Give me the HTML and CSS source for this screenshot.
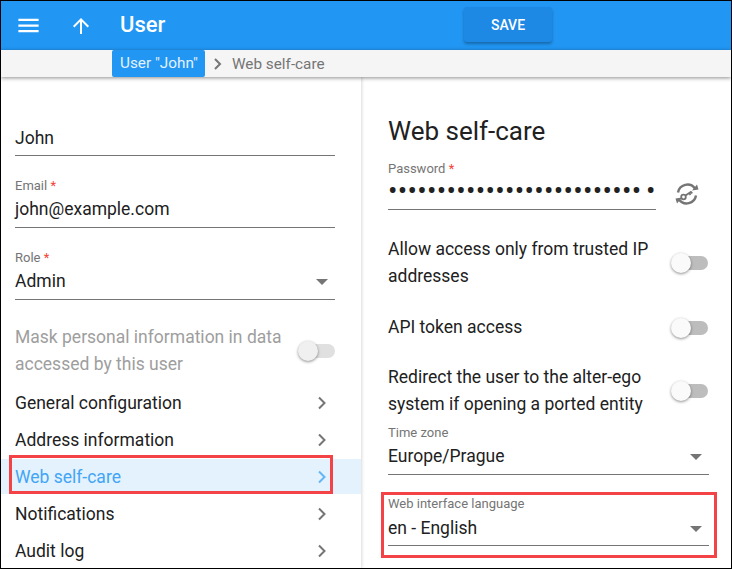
FILE: index.html
```html
<!DOCTYPE html>
<html lang="en">
<head>
  <meta charset="UTF-8" />
  <title>User</title>
  <link rel="stylesheet" href="styles.css">
</head>
<body>
  <div class="app">
    <header class="topbar">
      <button class="icon-btn menu-btn" aria-label="Menu">
        <svg width="27" height="27" viewBox="0 0 24 24"><path d="M3 18h18v-2H3v2zm0-5h18v-2H3v2zm0-7v2h18V6H3z" fill="#fff"/></svg>
      </button>
      <button class="icon-btn up-btn" aria-label="Up">
        <svg width="24" height="24" viewBox="0 0 24 24"><path d="M4 12l1.41 1.41L11 7.83V20h2V7.83l5.58 5.59L20 12l-8-8z" fill="#fff"/></svg>
      </button>
      <h1 class="page-title">User</h1>
      <button class="save-btn">SAVE</button>
    </header>

    <nav class="crumbs">
      <a class="crumb-active">User "John"</a>
      <svg class="crumb-sep" width="12" height="12" viewBox="0 0 12 12"><path d="M3 1l5 5-5 5" fill="none" stroke="#757575" stroke-width="2"/></svg>
      <span class="crumb">Web self-care</span>
    </nav>

    <main class="panels">
      <section class="panel-left">
        <div class="field field-name">
          <div class="value">John</div>
        </div>
        <div class="field field-email">
          <label>Email <em>*</em></label>
          <div class="value">john@example.com</div>
        </div>
        <div class="field field-role">
          <label>Role <em>*</em></label>
          <div class="value select">Admin<i class="caret"></i></div>
        </div>
        <div class="toggle-row disabled">
          <span>Mask personal information in data accessed by this user</span>
          <i class="switch"></i>
        </div>
        <ul class="menu">
          <li>General configuration<svg class="chev" width="10" height="14" viewBox="0 0 10 14"><path d="M2 1.500L7.500 7 2 12.500" fill="none" stroke="#757575" stroke-width="2"/></svg></li>
          <li>Address information<svg class="chev" width="10" height="14" viewBox="0 0 10 14"><path d="M2 1.500L7.500 7 2 12.500" fill="none" stroke="#757575" stroke-width="2"/></svg></li>
          <li class="current">Web self-care<svg class="chev" width="10" height="14" viewBox="0 0 10 14"><path d="M2 1.500L7.500 7 2 12.500" fill="none" stroke="#64b5f6" stroke-width="2"/></svg><b class="callout"></b></li>
          <li>Notifications<svg class="chev" width="10" height="14" viewBox="0 0 10 14"><path d="M2 1.500L7.500 7 2 12.500" fill="none" stroke="#757575" stroke-width="2"/></svg></li>
          <li>Audit log<svg class="chev" width="10" height="14" viewBox="0 0 10 14"><path d="M2 1.500L7.500 7 2 12.500" fill="none" stroke="#757575" stroke-width="2"/></svg></li>
        </ul>
      </section>

      <section class="panel-right">
        <h2>Web self-care</h2>
        <div class="password-row">
          <div class="field field-password">
            <label>Password <em>*</em></label>
            <div class="value dots">••••••••••••••••••••••••••<span class="last-dot">•</span></div>
          </div>
          <svg class="key-icon" width="26" height="26" viewBox="0 0 26 26">
            <path d="M4 11.500A9.500 9.500 0 0 1 21 7.500M22 14.500A9.500 9.500 0 0 1 5 18.500" fill="none" stroke="#757575" stroke-width="2.400"/>
            <path d="M18 9.500l6.500-1-1.500-5zM8 16.500l-6.500 1 1.500 5z" fill="#757575"/>
            <circle cx="9.500" cy="16" r="2.300" fill="none" stroke="#757575" stroke-width="1.800"/>
            <path d="M11.500 14.500l6-4M15 12l1.500 2M17 10.800l1.200 1.700" fill="none" stroke="#757575" stroke-width="1.800"/>
          </svg>
        </div>
        <div class="toggle-row trusted">
          <span>Allow access only from trusted IP addresses</span>
          <i class="switch"></i>
        </div>
        <div class="toggle-row api">
          <span>API token access</span>
          <i class="switch"></i>
        </div>
        <div class="toggle-row redirect">
          <span>Redirect the user to the alter-ego system if opening a ported entity</span>
          <i class="switch"></i>
        </div>
        <div class="field field-zone">
          <label>Time zone</label>
          <div class="value select">Europe/Prague<i class="caret"></i></div>
        </div>
        <div class="field field-lang">
          <label>Web interface language</label>
          <div class="value select">en - English<i class="caret"></i></div>
          <b class="callout"></b>
        </div>
      </section>
    </main>
  </div>
</body>
</html>
```

FILE: styles.css
```css
* {
  box-sizing: border-box;
}
html, body {
  margin: 0;
  padding: 0;
}
body {
  font-family: Roboto, "Liberation Sans", sans-serif;
  color: #212121;
  background: #fff;
}
.app {
  width: 732px;
  height: 569px;
  border: 1px solid #000;
  overflow: hidden;
  display: flex;
  flex-direction: column;
}

/* top bar */
.topbar {
  height: 49px;
  flex: none;
  background: #2196f3;
  display: flex;
  align-items: center;
  padding-left: 14px;
}
.icon-btn {
  height: 24px;
  padding: 0;
  border: 0;
  background: none;
  display: flex;
  align-items: center;
}
.menu-btn {
  width: 27px;
}
.up-btn {
  width: 24px;
  margin-left: 27px;
}
.page-title {
  margin: 0 0 2px 27px;
  width: 344px;
  font-size: 22px;
  font-weight: 500;
  color: #fff;
}
.save-btn {
  width: 88px;
  height: 35px;
  margin-top: -2px;
  border: 0;
  border-radius: 3px;
  background: #1e88e5;
  color: #fff;
  font: 500 14px Roboto, sans-serif;
  box-shadow: 0 2px 3px rgba(0,0,0,0.3);
}

/* breadcrumbs */
.crumbs {
  height: 27px;
  flex: none;
  background: #f5f5f5;
  display: flex;
  align-items: center;
  padding-left: 111px;
  font-size: 15.3px;
  color: #757575;
  box-shadow: 0 1px 4px rgba(0,0,0,0.45);
  position: relative;
  z-index: 2;
}
.crumb-active {
  height: 27px;
  line-height: 27px;
  width: 93px;
  padding-left: 8px;
  background: #2196f3;
  color: #e3f2fd;
  border-radius: 2px;
}
.crumb-sep {
  margin: 0 8px 0 7px;
}

/* panels */
.panels {
  flex: 1;
  display: flex;
  min-height: 0;
}
.panel-left {
  width: 360px;
  flex: none;
  padding-top: 49px;
  box-shadow: 1px 0 3px rgba(0,0,0,0.15);
}
.panel-right {
  flex: 1;
  padding: 37px 22px 0 27px;
  position: relative;
}
.panel-right h2 {
  margin: 0;
  font-size: 26px;
  font-weight: 400;
  line-height: 34px;
}

/* fields */
.field {
  position: relative;
  border-bottom: 1px solid #757575;
}
.field label {
  display: block;
  font-size: 13px;
  line-height: 14px;
  margin-bottom: 5px;
  color: #757575;
}
.field em {
  color: #f44336;
  font-style: normal;
}
.value {
  font-size: 17.5px;
  line-height: 24px;
  position: relative;
}
.panel-left .field {
  margin: 0 26px 0 14px;
}
.field-name {
  padding-bottom: 5px;
}
.panel-left .field-email {
  margin-top: 23px;
  padding-bottom: 6px;
}
.panel-left .field-email label,
.panel-left .field-role label {
  margin-bottom: 4px;
}
.panel-left .field-role {
  margin: 23px 26px 0 14px;
  padding-bottom: 6px;
}
.select .caret {
  position: absolute;
  right: 7px;
  top: 10px;
  border: 6px solid transparent;
  border-top-color: #757575;
  border-bottom: 0;
}

/* toggle rows */
.toggle-row {
  display: flex;
  align-items: center;
  justify-content: space-between;
  font-size: 17.5px;
  line-height: 27px;
}
.toggle-row span {
  width: 270px;
}
.switch {
  position: relative;
  width: 26px;
  height: 14px;
  flex: none;
  border-radius: 7px;
  background: #bdbdbd;
}
.switch::after {
  content: "";
  position: absolute;
  left: -11px;
  top: -3px;
  width: 20px;
  height: 20px;
  border-radius: 50%;
  background: #fafafa;
  box-shadow: 0 1px 3px rgba(0,0,0,0.45);
}
.disabled {
  color: #9e9e9e;
  margin: 24px 26px 0 14px;
}
.disabled .switch {
  background: #e0e0e0;
}
.disabled .switch::after {
  background: #f0f0f0;
}

/* menu */
.menu {
  list-style: none;
  margin: 6px 0 0;
  padding: 0;
}
.menu li {
  position: relative;
  height: 37px;
  padding: 0 34px 0 14px;
  display: flex;
  align-items: center;
  justify-content: space-between;
  font-size: 17.5px;
}
.menu .current {
  height: 35px;
  margin: 1px 0;
  background: #e3f2fd;
  color: #42a5f5;
}
.callout {
  position: absolute;
  border: 3px solid #f44346;
  pointer-events: none;
}
.current .callout {
  left: 8px;
  top: -4px;
  width: 324px;
  height: 39px;
}

/* right panel */
.password-row {
  display: flex;
  align-items: flex-end;
  margin-top: 14px;
}
.field-password {
  width: 268px;
  padding-bottom: 6px;
}
.field-password label {
  margin-bottom: 3px;
}
.dots {
  font-size: 28px;
  letter-spacing: 0.3px;
  white-space: nowrap;
}
.last-dot {
  margin-left: 4.5px;
}
.key-icon {
  margin: 0 0 3px 18px;
}
.trusted {
  margin-top: 26px;
}
.api {
  margin-top: 24px;
}
.redirect {
  margin-top: 23px;
}
.panel-right .toggle-row span {
  width: 268px;
}
.panel-right .switch {
  margin-right: 1px;
}
.field-zone {
  margin-top: 8px;
  padding-bottom: 6px;
}
.field-zone label {
  margin-bottom: 4px;
}
.field-lang {
  margin-top: 22px;
  padding-bottom: 5px;
}
.field-lang .callout {
  left: -7px;
  top: -5px;
  width: 336px;
  height: 66px;
}
```
